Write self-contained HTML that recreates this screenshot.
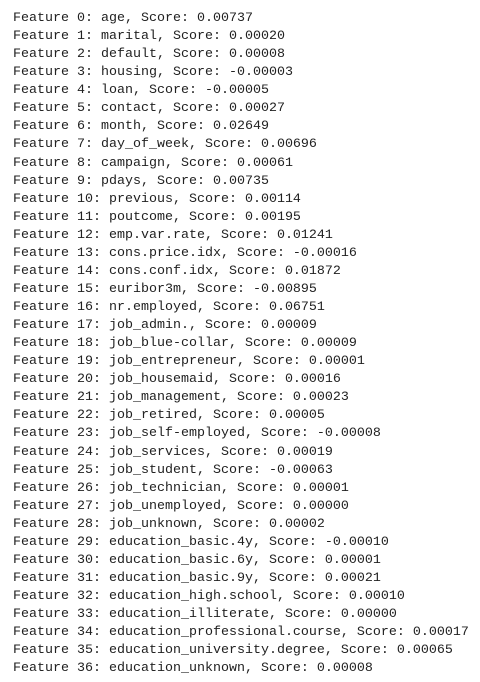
<!DOCTYPE html>
<html><head><meta charset="utf-8"><style>
body{margin:0;background:#fff;width:480px;height:682px;overflow:hidden}
pre{margin:0;padding:10px 0 0 13px;font-family:"Liberation Mono","DejaVu Sans Mono",monospace;font-size:13.33px;line-height:18.06px;color:#212121}
</style></head><body><pre>Feature 0: age, Score: 0.00737
Feature 1: marital, Score: 0.00020
Feature 2: default, Score: 0.00008
Feature 3: housing, Score: -0.00003
Feature 4: loan, Score: -0.00005
Feature 5: contact, Score: 0.00027
Feature 6: month, Score: 0.02649
Feature 7: day_of_week, Score: 0.00696
Feature 8: campaign, Score: 0.00061
Feature 9: pdays, Score: 0.00735
Feature 10: previous, Score: 0.00114
Feature 11: poutcome, Score: 0.00195
Feature 12: emp.var.rate, Score: 0.01241
Feature 13: cons.price.idx, Score: -0.00016
Feature 14: cons.conf.idx, Score: 0.01872
Feature 15: euribor3m, Score: -0.00895
Feature 16: nr.employed, Score: 0.06751
Feature 17: job_admin., Score: 0.00009
Feature 18: job_blue-collar, Score: 0.00009
Feature 19: job_entrepreneur, Score: 0.00001
Feature 20: job_housemaid, Score: 0.00016
Feature 21: job_management, Score: 0.00023
Feature 22: job_retired, Score: 0.00005
Feature 23: job_self-employed, Score: -0.00008
Feature 24: job_services, Score: 0.00019
Feature 25: job_student, Score: -0.00063
Feature 26: job_technician, Score: 0.00001
Feature 27: job_unemployed, Score: 0.00000
Feature 28: job_unknown, Score: 0.00002
Feature 29: education_basic.4y, Score: -0.00010
Feature 30: education_basic.6y, Score: 0.00001
Feature 31: education_basic.9y, Score: 0.00021
Feature 32: education_high.school, Score: 0.00010
Feature 33: education_illiterate, Score: 0.00000
Feature 34: education_professional.course, Score: 0.00017
Feature 35: education_university.degree, Score: 0.00065
Feature 36: education_unknown, Score: 0.00008</pre></body></html>
